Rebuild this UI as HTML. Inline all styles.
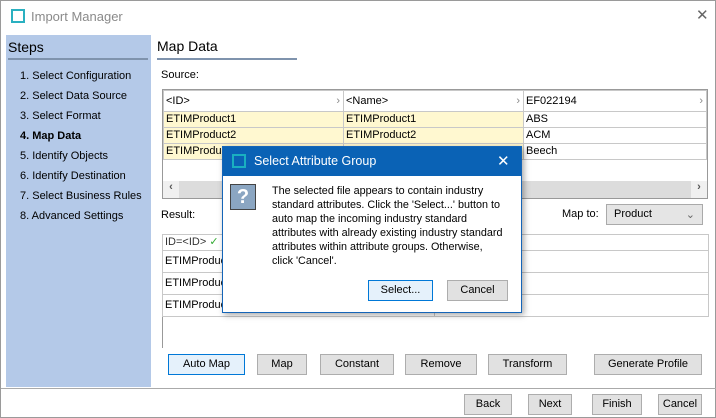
<!DOCTYPE html>
<html><head><style>
*{box-sizing:border-box;margin:0;padding:0}
body{width:716px;height:418px;background:#fff;font-family:"Liberation Sans",sans-serif;font-size:11px;color:#000;position:relative;overflow:hidden;border:1px solid #9a9a9a}
.a{position:absolute}
.btn{position:absolute;background:#e1e1e1;border:1px solid #adadad;text-align:center;line-height:18px;font-size:11px}
.cell{position:absolute;border:1px solid #c8c8c8;padding-left:2px;line-height:15px;white-space:nowrap;overflow:hidden}
.y{background:#fff8d0}
</style></head><body>
<div class="a" style="left:10px;top:8px;width:14px;height:14px;border:2px solid #2ab0c0"></div>
<div class="a" style="left:30px;top:8px;font-size:13px;color:#8a8a8a">Import Manager</div>
<div class="a" style="left:695px;top:5px;font-size:15px;color:#666">✕</div>

<div class="a" style="left:5px;top:34px;width:145px;height:352px;background:#b4c9e8"></div>
<div class="a" style="left:7px;top:38px;font-size:14px">Steps</div>
<div class="a" style="left:7px;top:57px;width:140px;height:2px;background:#7f93ad"></div>
<div class="a" style="left:19px;top:65px;line-height:20px;font-size:11px">1. Select Configuration<br>2. Select Data Source<br>3. Select Format<br><b>4. Map Data</b><br>5. Identify Objects<br>6. Identify Destination<br>7. Select Business Rules<br>8. Advanced Settings</div>

<div class="a" style="left:156px;top:37px;font-size:14px">Map Data</div>
<div class="a" style="left:156px;top:57px;width:140px;height:2px;background:#7f93ad"></div>
<div class="a" style="left:160px;top:68px">Source:</div>

<div class="a" style="left:161px;top:88px;width:546px;height:110px;border:1px solid #999"></div>
<div class="cell" style="left:162px;top:89px;width:181px;height:22px;line-height:20px">&lt;ID&gt;<span style="float:right;color:#888;padding-right:3px">›</span></div>
<div class="cell" style="left:342px;top:89px;width:181px;height:22px;line-height:20px">&lt;Name&gt;<span style="float:right;color:#888;padding-right:3px">›</span></div>
<div class="cell" style="left:522px;top:89px;width:184px;height:22px;line-height:20px">EF022194<span style="float:right;color:#888;padding-right:3px">›</span></div>
<div class="cell y" style="left:162px;top:110px;width:181px;height:17px">ETIMProduct1</div>
<div class="cell y" style="left:342px;top:110px;width:181px;height:17px">ETIMProduct1</div>
<div class="cell" style="left:522px;top:110px;width:184px;height:17px">ABS</div>
<div class="cell y" style="left:162px;top:126px;width:181px;height:17px">ETIMProduct2</div>
<div class="cell y" style="left:342px;top:126px;width:181px;height:17px">ETIMProduct2</div>
<div class="cell" style="left:522px;top:126px;width:184px;height:17px">ACM</div>
<div class="cell y" style="left:162px;top:142px;width:181px;height:17px">ETIMProduct3</div>
<div class="cell y" style="left:342px;top:142px;width:181px;height:17px">ETIMProduct3</div>
<div class="cell" style="left:522px;top:142px;width:184px;height:17px">Beech</div>
<div class="a" style="left:162px;top:180px;width:544px;height:17px;background:#dcdcdc"></div>
<div class="a" style="left:162px;top:180px;width:16px;height:17px;background:#f0f0f0;text-align:center;color:#555;font-weight:bold">‹</div>
<div class="a" style="left:690px;top:180px;width:16px;height:17px;background:#f0f0f0;text-align:center;color:#555;font-weight:bold">›</div>

<div class="a" style="left:160px;top:208px">Result:</div>
<div class="a" style="left:561px;top:207px">Map to:</div>
<div class="a" style="left:605px;top:203px;width:97px;height:21px;background:#e5e5e5;border:1px solid #aaa;padding:3px 7px">Product<span style="float:right;color:#666">⌄</span></div>

<div class="a" style="left:161px;top:233px;width:547px;height:114px;border:1px solid #999;border-bottom:none;border-right:none"></div>
<div class="cell" style="left:161px;top:233px;width:273px;height:17px;color:#333">ID=&lt;ID&gt; <span style="color:#3a3">✓</span></div>
<div class="cell" style="left:433px;top:233px;width:275px;height:17px;color:#3a3">&nbsp;✓</div>
<div class="cell" style="left:161px;top:249px;width:273px;height:23px;line-height:21px">ETIMProduct1</div>
<div class="cell" style="left:433px;top:249px;width:275px;height:23px"></div>
<div class="cell" style="left:161px;top:271px;width:273px;height:23px;line-height:21px">ETIMProduct2</div>
<div class="cell" style="left:433px;top:271px;width:275px;height:23px"></div>
<div class="cell" style="left:161px;top:293px;width:273px;height:23px;line-height:21px">ETIMProduct3</div>
<div class="cell" style="left:433px;top:293px;width:275px;height:23px"></div>

<div class="btn" style="left:167px;top:353px;width:77px;height:21px;background:#e5f1fb;border-color:#0078d7">Auto Map</div>
<div class="btn" style="left:256px;top:353px;width:50px;height:21px">Map</div>
<div class="btn" style="left:319px;top:353px;width:74px;height:21px">Constant</div>
<div class="btn" style="left:404px;top:353px;width:72px;height:21px">Remove</div>
<div class="btn" style="left:487px;top:353px;width:79px;height:21px">Transform</div>
<div class="btn" style="left:593px;top:353px;width:108px;height:21px">Generate Profile</div>
<div class="a" style="left:0;top:387px;width:716px;height:1px;background:#aaa"></div>
<div class="btn" style="left:463px;top:393px;width:48px;height:21px">Back</div>
<div class="btn" style="left:527px;top:393px;width:44px;height:21px">Next</div>
<div class="btn" style="left:591px;top:393px;width:50px;height:21px">Finish</div>
<div class="btn" style="left:657px;top:393px;width:44px;height:21px">Cancel</div>

<div class="a" style="left:221px;top:145px;width:300px;height:167px;border:1px solid #1565b8;background:#fff;box-shadow:2px 2px 6px rgba(0,0,0,.35)">
 <div class="a" style="left:0;top:0;width:298px;height:29px;background:#0a62b5"></div>
 <div class="a" style="left:9px;top:7px;width:14px;height:14px;border:2px solid #1ab0c0"></div>
 <div class="a" style="left:31px;top:7px;color:#fff;font-size:12.5px">Select Attribute Group</div>
 <div class="a" style="left:274px;top:5px;color:#fff;font-size:15px">✕</div>
 <div class="a" style="left:7px;top:37px;width:26px;height:26px;background:#8ba6c2;border:1px solid #444;color:#fff;font-weight:bold;font-size:20px;text-align:center;line-height:24px">?</div>
 <div class="a" style="left:49px;top:37px;width:250px;line-height:14px;font-size:10.8px;white-space:nowrap">The selected file appears to contain industry<br>standard attributes. Click the 'Select...' button to<br>auto map the incoming industry standard<br>attributes with already existing industry standard<br>attributes within attribute groups. Otherwise,<br>click 'Cancel'.</div>
 <div class="btn" style="left:145px;top:133px;width:65px;height:21px;background:#e5f1fb;border-color:#0078d7">Select...</div>
 <div class="btn" style="left:224px;top:133px;width:61px;height:21px">Cancel</div>
</div>
</body></html>
